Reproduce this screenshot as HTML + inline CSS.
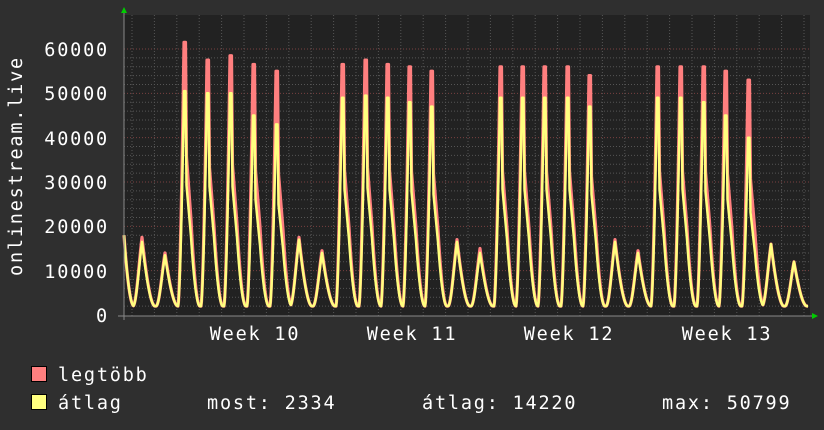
<!DOCTYPE html>
<html><head><meta charset="utf-8"><style>
body{margin:0;background:#2f2f2f;width:824px;height:430px;overflow:hidden;font-family:"DejaVu Sans Mono","Liberation Mono",monospace;color:#fff}
svg{position:absolute;left:0;top:0}
</style></head><body>
<svg id="s" width="824" height="430" xmlns="http://www.w3.org/2000/svg" font-family="DejaVu Sans Mono, Liberation Mono, monospace" font-size="18.5" letter-spacing="1.8" fill="#fff">
<rect x="124" y="15" width="686" height="301" fill="#222"/>
<g id="grid"></g>
<g id="data"></g>
<line x1="118" y1="316" x2="812" y2="316" stroke="#888" stroke-width="1"/>
<line x1="124" y1="12" x2="124" y2="320" stroke="#888" stroke-width="1"/>
<polygon points="121,13 127,13 124,7" fill="#0c0"/>
<polygon points="812,313 812,319 818,316" fill="#0c0"/>
<g text-anchor="end">
<text x="109" y="56">60000</text><text x="109" y="100">50000</text><text x="109" y="145">40000</text>
<text x="109" y="189">30000</text><text x="109" y="233">20000</text><text x="109" y="278">10000</text><text x="109" y="322">0</text>
</g>
<text transform="translate(22,166) rotate(-90)" text-anchor="middle">onlinestream.live</text>
<g text-anchor="middle"><text x="255" y="340">Week 10</text><text x="412" y="340">Week 11</text><text x="569" y="340">Week 12</text><text x="727" y="340">Week 13</text></g>
<rect x="31.5" y="366.5" width="15" height="15" fill="#ff7f7f" stroke="#000"/>
<rect x="31.5" y="394.5" width="15" height="15" fill="#ffff7f" stroke="#000"/>
<text x="58" y="381">legtöbb</text>
<text x="58" y="409">átlag</text>
<text x="207" y="409">most: 2334</text>
<text x="422" y="409">átlag: 14220</text>
<text x="662" y="409">max: 50799</text>
</svg>
<script>
var Y=v=>315-v*0.004433;
var g='';
for(var v=2000;v<=60000;v+=2000){var y=Y(v);g+='<line x1="124" x2="810" y1="'+y+'" y2="'+y+'" stroke="'+(v%10000?'#555':'#7a4040')+'" stroke-dasharray="1,2" stroke-width="1"/>';}
for(var x=132;x<810;x+=22.4){var mj=Math.abs(((x-232)%157+157)%157)<3;g+='<line y1="15" y2="316" x1="'+x+'" x2="'+x+'" stroke="'+(mj?'#7a4040':'#555')+'" stroke-dasharray="1,2"/>';}
document.getElementById('grid').innerHTML=g;
var P=[[142,17.5,16.5,0],[165,14,13.5,0],[184,61.5,50.5,1],[207,57.5,50,1],[230,58.5,50,1],[253,56.5,45,1],[276,55,43,1],[299,17.5,17,0],[322,14.5,14,0],[342,56.5,49,1],[365,57.5,49.5,1],[387,56.5,49,1],[409,56,48,1],[431,55,47,1],[457,17,16.5,0],[480,15,14,0],[500,56,49,1],[522,56,49,1],[544,56,49,1],[567,56,49,1],[589,54,47,1],[615,17,16.5,0],[638,14.5,14,0],[657,56,49,1],[680,56,49,1],[703,56,48,1],[725,55,45,1],[748,53,40,1],[771,16,16,0],[794,12,12,0]];
function val(x,k){
 var best=2;
 if(x<134){var t=(x-124)/10;best=Math.max(2,2+16*(1-t)*(1-t));}
 for(var i=0;i<P.length;i++){var p=P[i],pk=p[k],d=x-p[0];var v=2;
  if(p[3]){
   if(d>=-6&&d<0){var t=1+d/6;v=2+(pk-2)*Math.pow(t,1.6);}
   else if(d>=0){ if(d<1.5)v=pk; else if(d<2.5)v=pk-(d-1.5)*0.42*pk; else if(d<7)v=pk*0.58-(d-2.5)/4.5*pk*0.23; else if(d<16){var t=1-(d-7)/9;v=2+(pk*0.35-2)*t*t;}}
  } else {
   if(d>=-9&&d<0){var t=1+d/9;v=2+(pk-2)*Math.sin(t*Math.PI/2)*t;}
   else if(d>=0&&d<13){var t=1-d/13;v=2+(pk-2)*t*t*(1.3-0.3*t);}
  }
  if(v>best)best=v;}
 return best*1000;}
function path(k){var s='';for(var x=124;x<=808;x+=0.5){s+=(x==124?'M':'L')+x+','+Y(val(x,k)).toFixed(1);}return s;}
document.getElementById('data').innerHTML='<path d="'+path(1)+'" fill="none" stroke="#ff7f7f" stroke-width="3.2" stroke-linejoin="round"/><path d="'+path(2)+'" fill="none" stroke="#ffff7f" stroke-width="2.5" stroke-linejoin="round"/>';
</script>
</body></html>
